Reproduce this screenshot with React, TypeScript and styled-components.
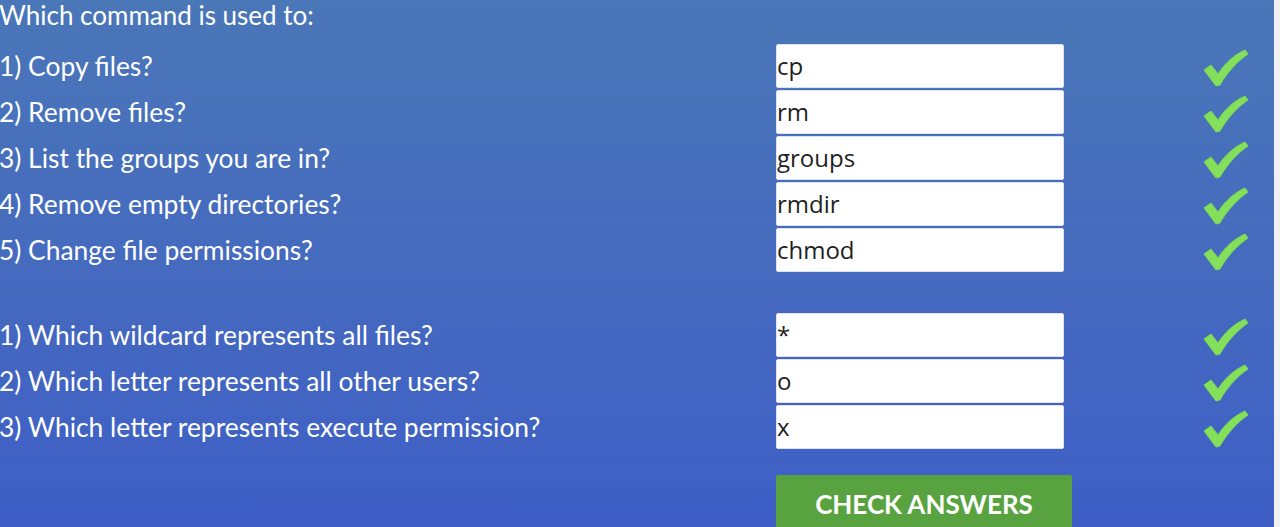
import React, { useState } from "react";
import styled, { createGlobalStyle } from "styled-components";

const GlobalStyle = createGlobalStyle`
  html, body {
    margin: 0;
    padding: 0;
    height: 100%;
    overflow: hidden;
    background: #f1f1f4;
  }
  #root {
    height: 100%;
  }
`;

const groupOne = [
  { q: "1) Copy files?", a: "cp" },
  { q: "2) Remove files?", a: "rm" },
  { q: "3) List the groups you are in?", a: "groups" },
  { q: "4) Remove empty directories?", a: "rmdir" },
  { q: "5) Change file permissions?", a: "chmod" },
];

const groupTwo = [
  { q: "1) Which wildcard represents all files?", a: "*" },
  { q: "2) Which letter represents all other users?", a: "o" },
  { q: "3) Which letter represents execute permission?", a: "x" },
];

function Check() {
  return (
    <svg width="46" height="38" viewBox="0 0 46 38">
      <path
        d="M1 21 L8 16 L15 25 C22 14 31 6 42 1 L45 5 C35 12 25 22 17 36 L13 37 Z"
        fill="#84e05b"
        stroke="#7cd657"
        strokeWidth="1"
        strokeLinejoin="round"
      />
    </svg>
  );
}

function QuizGroup({ items }: { items: { q: string; a: string }[] }) {
  return (
    <Group>
      {items.map((item) => (
        <Row key={item.q}>
          <Question>{item.q}</Question>
          <AnswerInput defaultValue={item.a} />
          <CheckCell>
            <Check />
          </CheckCell>
        </Row>
      ))}
    </Group>
  );
}

export default function App() {
  const [checked] = useState(true);
  return (
    <Page>
      <GlobalStyle />
      <Panel>
        <Title>Which command is used to:</Title>
        <QuizGroup items={groupOne} />
        <QuizGroup items={groupTwo} />
        <ButtonRow>
          <CheckButton type="button" disabled={!checked}>
            CHECK ANSWERS
          </CheckButton>
        </ButtonRow>
      </Panel>
    </Page>
  );
}

const Page = styled.div`
  display: flex;
  height: 100%;
  padding-right: 6px;
  background: #f1f1f4;
`;

const Panel = styled.div`
  flex: 1;
  display: flex;
  flex-direction: column;
  background: linear-gradient(180deg, #4a77b8 0%, #4468c0 60%, #3e5ec6 100%);
  font-family: Lato, "Noto Sans", sans-serif;
  color: #ffffff;
  overflow: hidden;

  & > * {
    flex-shrink: 0;
  }
`;

const Title = styled.div`
  height: 44px;
  margin-left: -1px;
  font-size: 26px;
  line-height: 30px;
  white-space: nowrap;
`;

const Group = styled.div`
  display: flex;
  flex-direction: column;
  gap: 2px;
  & + & {
    margin-top: 41px;
  }
`;

const Row = styled.div`
  display: grid;
  grid-template-columns: 776px 288px 1fr;
  align-items: center;
  height: 44px;
  flex-shrink: 0;
`;

const Question = styled.div`
  margin-left: -1px;
  font-size: 26.4px;
  line-height: 44px;
  white-space: nowrap;
`;

const AnswerInput = styled.input`
  box-sizing: border-box;
  width: 288px;
  height: 44px;
  margin: 0;
  padding: 0 0 2px;
  border: 1px solid #dfe3ea;
  border-radius: 2px;
  background: #ffffff;
  font-family: "Open Sans", "Noto Sans", sans-serif;
  font-size: 24px;
  color: #1f1f1f;
  outline: none;
`;

const CheckCell = styled.div`
  display: flex;
  align-items: center;
  padding-left: 139px;
  padding-top: 4px;
`;

const ButtonRow = styled.div`
  padding-left: 776px;
  margin-top: 26px;
`;

const CheckButton = styled.button`
  width: 296px;
  height: 58px;
  border: none;
  border-radius: 2px;
  background: #58a23f;
  color: #ffffff;
  font-family: Lato, "Noto Sans", sans-serif;
  font-weight: 700;
  font-size: 26px;
  cursor: pointer;
  padding: 0;
  line-height: 56px;
  text-align: center;

  &:disabled {
    opacity: 0.6;
  }
`;
